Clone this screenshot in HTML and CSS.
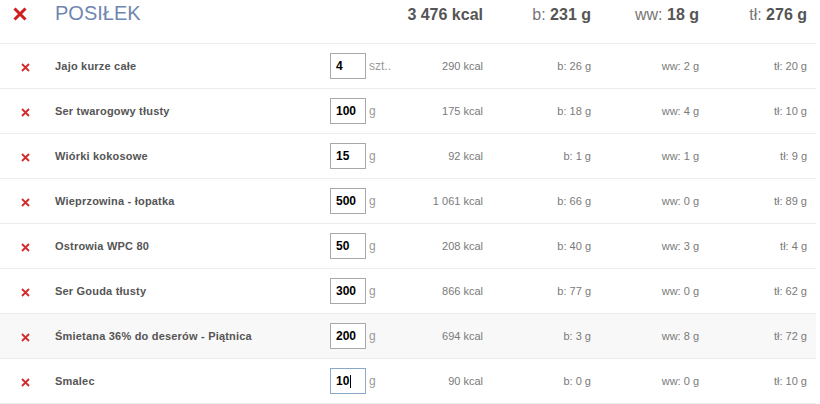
FILE: index.html
```html
<!DOCTYPE html>
<html lang="pl">
<head>
<meta charset="utf-8">
<title>Posiłek</title>
<link rel="stylesheet" href="styles.css">
</head>
<body>
<div class="meal">
  <div class="meal-head">
    <span class="del-big"><svg width="14" height="14" viewBox="0 0 14 14"><path d="M1.5 1.5 L12.5 12.5 M12.5 1.5 L1.5 12.5" stroke="#d01d1d" stroke-width="3" stroke-linecap="butt"/></svg></span>
    <span class="title">POSIŁEK</span>
    <span class="tot kcal">3 476 kcal</span>
    <span class="tot"><span class="lbl">b: </span>231 g</span>
    <span class="tot"><span class="lbl">ww: </span>18 g</span>
    <span class="tot"><span class="lbl">tł: </span>276 g</span>
  </div>

  <div class="row">
    <span class="del"><svg width="9" height="9" viewBox="0 0 9 9"><path d="M1 1 L8 8 M8 1 L1 8" stroke="#d42a2a" stroke-width="1.8"/></svg></span>
    <span class="name">Jajo kurze całe</span>
    <input class="qty" type="text" value="4">
    <span class="unit">szt..</span>
    <span class="val">290 kcal</span>
    <span class="val">b: 26 g</span>
    <span class="val">ww: 2 g</span>
    <span class="val">tł: 20 g</span>
  </div>

  <div class="row">
    <span class="del"><svg width="9" height="9" viewBox="0 0 9 9"><path d="M1 1 L8 8 M8 1 L1 8" stroke="#d42a2a" stroke-width="1.8"/></svg></span>
    <span class="name">Ser twarogowy tłusty</span>
    <input class="qty" type="text" value="100">
    <span class="unit">g</span>
    <span class="val">175 kcal</span>
    <span class="val">b: 18 g</span>
    <span class="val">ww: 4 g</span>
    <span class="val">tł: 10 g</span>
  </div>

  <div class="row">
    <span class="del"><svg width="9" height="9" viewBox="0 0 9 9"><path d="M1 1 L8 8 M8 1 L1 8" stroke="#d42a2a" stroke-width="1.8"/></svg></span>
    <span class="name">Wiórki kokosowe</span>
    <input class="qty" type="text" value="15">
    <span class="unit">g</span>
    <span class="val">92 kcal</span>
    <span class="val">b: 1 g</span>
    <span class="val">ww: 1 g</span>
    <span class="val">tł: 9 g</span>
  </div>

  <div class="row">
    <span class="del"><svg width="9" height="9" viewBox="0 0 9 9"><path d="M1 1 L8 8 M8 1 L1 8" stroke="#d42a2a" stroke-width="1.8"/></svg></span>
    <span class="name">Wieprzowina - łopatka</span>
    <input class="qty" type="text" value="500">
    <span class="unit">g</span>
    <span class="val">1 061 kcal</span>
    <span class="val">b: 66 g</span>
    <span class="val">ww: 0 g</span>
    <span class="val">tł: 89 g</span>
  </div>

  <div class="row">
    <span class="del"><svg width="9" height="9" viewBox="0 0 9 9"><path d="M1 1 L8 8 M8 1 L1 8" stroke="#d42a2a" stroke-width="1.8"/></svg></span>
    <span class="name">Ostrowia WPC 80</span>
    <input class="qty" type="text" value="50">
    <span class="unit">g</span>
    <span class="val">208 kcal</span>
    <span class="val">b: 40 g</span>
    <span class="val">ww: 3 g</span>
    <span class="val">tł: 4 g</span>
  </div>

  <div class="row">
    <span class="del"><svg width="9" height="9" viewBox="0 0 9 9"><path d="M1 1 L8 8 M8 1 L1 8" stroke="#d42a2a" stroke-width="1.8"/></svg></span>
    <span class="name">Ser Gouda tłusty</span>
    <input class="qty" type="text" value="300">
    <span class="unit">g</span>
    <span class="val">866 kcal</span>
    <span class="val">b: 77 g</span>
    <span class="val">ww: 0 g</span>
    <span class="val">tł: 62 g</span>
  </div>

  <div class="row hover">
    <span class="del"><svg width="9" height="9" viewBox="0 0 9 9"><path d="M1 1 L8 8 M8 1 L1 8" stroke="#d42a2a" stroke-width="1.8"/></svg></span>
    <span class="name">Śmietana 36% do deserów - Piątnica</span>
    <input class="qty" type="text" value="200">
    <span class="unit">g</span>
    <span class="val">694 kcal</span>
    <span class="val">b: 3 g</span>
    <span class="val">ww: 8 g</span>
    <span class="val">tł: 72 g</span>
  </div>

  <div class="row">
    <span class="del"><svg width="9" height="9" viewBox="0 0 9 9"><path d="M1 1 L8 8 M8 1 L1 8" stroke="#d42a2a" stroke-width="1.8"/></svg></span>
    <span class="name">Smalec</span>
    <span class="qty-wrap"><input class="qty focus" type="text" value="10"><span class="caret"></span></span>
    <span class="unit">g</span>
    <span class="val">90 kcal</span>
    <span class="val">b: 0 g</span>
    <span class="val">ww: 0 g</span>
    <span class="val">tł: 10 g</span>
  </div>
</div>
</body>
</html>
```
FILE: styles.css
```css
html, body {
  margin: 0;
  padding: 0;
  background: #fff;
}
body {
  font-family: "Liberation Sans", Arial, sans-serif;
  color: #555;
}
.meal {
  width: 816px;
}
.meal-head,
.row {
  display: grid;
  grid-template-columns: 55px 275px 36px 29px 88px 108px 108px 108px;
  padding-right: 9px;
  border-bottom: 1px solid #ececec;
}
.meal-head {
  height: 43px;
  align-items: baseline;
}
.del-big {
  padding-left: 13px;
  padding-top: 7px;
  align-self: start;
  line-height: 0;
}
.title {
  grid-column: 2 / 5;
  font-size: 20px;
  line-height: 26px;
  color: #6f86b1;
}
.tot {
  text-align: right;
  font-size: 16px;
  font-weight: bold;
  color: #555;
  white-space: nowrap;
}
.tot .lbl {
  font-weight: normal;
  color: #777;
}
.row {
  height: 44px;
  align-items: center;
}
.row.hover {
  background: #f8f8f8;
}
.del {
  padding-left: 21px;
  padding-top: 2px;
  line-height: 0;
}
.name {
  font-size: 11px;
  font-weight: bold;
  letter-spacing: 0.2px;
  color: #555;
  white-space: nowrap;
}
.qty-wrap {
  position: relative;
  display: block;
  width: 36px;
  height: 26px;
}
.qty {
  box-sizing: border-box;
  width: 36px;
  height: 26px;
  margin: 0;
  padding: 0 0 0 5px;
  border: 1px solid #a9a9a9;
  background: #fff;
  font-family: "Liberation Sans", Arial, sans-serif;
  font-size: 12px;
  font-weight: bold;
  color: #000;
  outline: none;
}
.qty.focus {
  border-color: #8aa9c8;
}
.caret {
  position: absolute;
  left: 20px;
  top: 7px;
  width: 1px;
  height: 13px;
  background: #000;
}
.unit {
  padding-left: 3px;
  font-size: 12px;
  color: #999;
  white-space: nowrap;
  overflow: visible;
}
.val {
  text-align: right;
  font-size: 11px;
  color: #7a7a7a;
  white-space: nowrap;
}
```
